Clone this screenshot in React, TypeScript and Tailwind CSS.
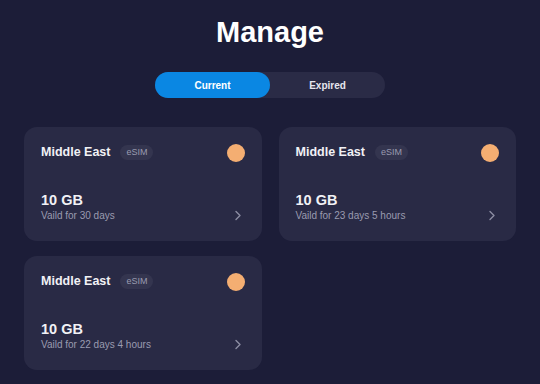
import React from "react";

const cards = [
  "Vaild for 30 days",
  "Vaild for 23 days 5 hours",
  "Vaild for 22 days 4 hours",
];

function Card({ sub }: { sub: string }) {
  return (
    <div className="bg-[#292a45] rounded-[13px] pl-[17px] pr-[17px] pt-[17px] pb-[18px] h-[114px] flex flex-col">
      <div className="flex items-center h-[18px]">
        <span className="text-[12.5px] font-bold text-[#f1f1f5] leading-none -mt-[2px]">Middle East</span>
        <span className="ml-[10px] bg-[#34354f] text-[#9a9bb0] text-[9px] leading-none px-[6px] h-[15px] flex items-center rounded-full -mt-[1px]">eSIM</span>
        <span className="ml-auto w-[18px] h-[18px] rounded-full bg-[#f4ae72]" />
      </div>
      <div className="mt-auto flex items-end">
        <div className="flex flex-col">
          <span className="text-[14.5px] font-bold text-[#f1f1f5] leading-[18px]">10 GB</span>
          <span className="text-[10px] text-[#9a9bb0] leading-[14px]">{sub}</span>
        </div>
        <svg className="ml-auto mb-[2px] mr-[3px]" width="8" height="11" viewBox="0 0 8 11" fill="none">
          <path d="M2 1.5 L6 5.5 L2 9.5" stroke="#8c8da3" strokeWidth="1.4" strokeLinecap="round" strokeLinejoin="round" />
        </svg>
      </div>
    </div>
  );
}

export default function App() {
  return (
    <div className="w-[540px] h-[384px] bg-[#1c1d38] overflow-hidden" style={{ fontFamily: '"Liberation Sans", Arial, sans-serif' }}>
      <div className="pt-[15px] text-center text-white text-[29px] font-bold leading-[34px]">Manage</div>
      <div className="mt-[23px] mx-auto w-[230px] h-[26px] rounded-full bg-[#2a2b46] flex">
        <div className="w-[115px] h-full rounded-full bg-[#0a87e3] flex items-center justify-center text-white text-[10px] font-bold">Current</div>
        <div className="w-[115px] h-full flex items-center justify-center text-[#e6e6ee] text-[10px] font-bold">Expired</div>
      </div>
      <div className="mt-[29px] px-6 grid grid-cols-2 gap-x-[17px] gap-y-[15px]">
        {cards.map((c, i) => (
          <Card key={i} sub={c} />
        ))}
      </div>
    </div>
  );
}
